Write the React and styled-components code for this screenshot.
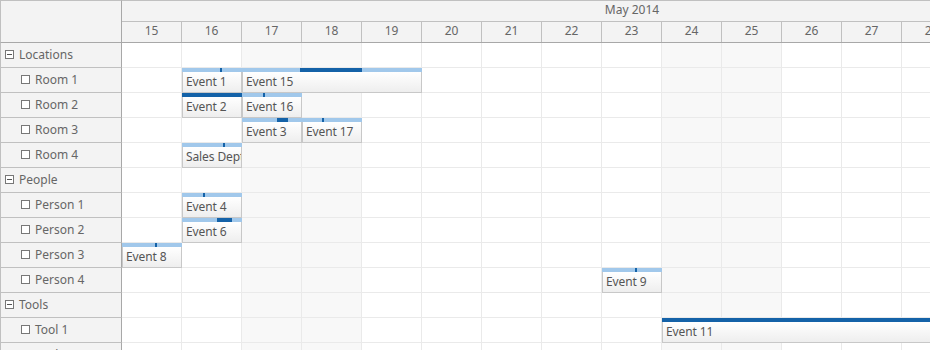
import React from 'react';
import styled, { createGlobalStyle } from 'styled-components';

const GlobalStyle = createGlobalStyle`
  html, body {
    margin: 0;
    padding: 0;
    background: #fff;
  }
  body {
    font-family: "Noto Sans", "Liberation Sans", Arial, sans-serif;
    font-size: 12px;
    color: #666;
  }
`;

const CELL = 60;
const ROW = 25;
const DAYS = Array.from({ length: 17 }, (_, i) => 15 + i);
const WEEKEND = [17, 18, 24, 25, 31];

const ROWS = [
  { name: 'Locations', parent: true },
  { name: 'Room 1' },
  { name: 'Room 2' },
  { name: 'Room 3' },
  { name: 'Room 4' },
  { name: 'People', parent: true },
  { name: 'Person 1' },
  { name: 'Person 2' },
  { name: 'Person 3' },
  { name: 'Person 4' },
  { name: 'Tools', parent: true },
  { name: 'Tool 1' },
  { name: 'Tool 2' },
];

// start = column index from May 15, done = dark part of the bar in px
const EVENTS = [
  { row: 1, text: 'Event 1', start: 1, span: 1, done: [38, 40] },
  { row: 1, text: 'Event 15', start: 2, span: 3, done: [58, 120] },
  { row: 2, text: 'Event 2', start: 1, span: 1, done: [0, 60] },
  { row: 2, text: 'Event 16', start: 2, span: 1, done: [21, 23] },
  { row: 3, text: 'Event 3', start: 2, span: 1, done: [35, 46] },
  { row: 3, text: 'Event 17', start: 3, span: 1, done: [20, 22] },
  { row: 4, text: 'Sales Dept', start: 1, span: 1, done: [41, 43] },
  { row: 6, text: 'Event 4', start: 1, span: 1, done: [21, 23] },
  { row: 7, text: 'Event 6', start: 1, span: 1, done: [35, 50] },
  { row: 8, text: 'Event 8', start: 0, span: 1, done: [33, 35] },
  { row: 9, text: 'Event 9', start: 8, span: 1, done: [33, 35] },
  { row: 11, text: 'Event 11', start: 9, span: 8, done: [0, 480] },
];

const Scheduler = styled.div`
  display: grid;
  grid-template-columns: 122px 1fr;
  grid-template-rows: 43px 1fr;
  width: 930px;
  height: 350px;
  overflow: hidden;
`;

const Corner = styled.div`
  box-sizing: border-box;
  background: #f3f3f3;
  border-top: 1px solid #c0c0c0;
  border-left: 1px solid #c0c0c0;
  border-right: 1px solid #a8a8a8;
  border-bottom: 1px solid #a8a8a8;
`;

const TimeHeader = styled.div`
  overflow: hidden;
  background: #f3f3f3;
  border-top: 1px solid #c0c0c0;
  border-bottom: 1px solid #a8a8a8;
  box-sizing: border-box;
`;

const MonthRow = styled.div`
  box-sizing: border-box;
  width: ${DAYS.length * CELL}px;
  height: 21px;
  line-height: 18px;
  text-align: center;
  border-bottom: 1px solid #c0c0c0;
`;

const DayRow = styled.div`
  display: flex;
  width: ${DAYS.length * CELL}px;
  height: 20px;
`;

const DayCell = styled.div`
  box-sizing: border-box;
  flex: 0 0 ${CELL}px;
  line-height: 17px;
  text-align: center;
  border-right: 1px solid #c0c0c0;
`;

const RowHeaders = styled.div`
  display: flex;
  flex-direction: column;
`;

const RowHeader = styled.div`
  box-sizing: border-box;
  display: flex;
  align-items: center;
  gap: 5px;
  height: ${ROW}px;
  flex: 0 0 ${ROW}px;
  padding-left: ${(p) => (p.$parent ? 4 : 20)}px;
  padding-bottom: 1px;
  background: #f3f3f3;
  border-left: 1px solid #c0c0c0;
  border-right: 1px solid #a8a8a8;
  border-bottom: 1px solid #c0c0c0;
  white-space: nowrap;
`;

const Toggle = styled.span`
  box-sizing: border-box;
  position: relative;
  flex: 0 0 9px;
  width: 9px;
  height: 9px;
  border: 1px solid #777;
  background: #fff;

  &::after {
    content: '';
    display: ${(p) => (p.$minus ? 'block' : 'none')};
    position: absolute;
    left: 1px;
    right: 1px;
    top: 3px;
    height: 1px;
    background: #555;
  }
`;

const Grid = styled.div`
  display: flex;
  flex-direction: column;
  overflow: hidden;
`;

const GridRow = styled.div`
  position: relative;
  display: flex;
  width: ${DAYS.length * CELL}px;
  height: ${ROW}px;
  flex: 0 0 ${ROW}px;
`;

const Cell = styled.div`
  box-sizing: border-box;
  flex: 0 0 ${CELL}px;
  height: ${ROW}px;
  background: ${(p) => (p.$weekend ? '#f8f8f8' : '#fff')};
  border-right: 1px solid #eaeaea;
  border-bottom: 1px solid #eaeaea;
`;

const Event = styled.div`
  position: absolute;
  top: 0;
  display: flex;
  flex-direction: column;
  height: ${ROW}px;
`;

const Bar = styled.div`
  position: relative;
  height: 4px;
  flex: 0 0 4px;
  background: #a1c8eb;
`;

const BarDone = styled.div`
  position: absolute;
  top: 0;
  bottom: 0;
  background: #1462a8;
`;

const EventBox = styled.div`
  box-sizing: border-box;
  flex: 1;
  padding-left: 3px;
  line-height: 19px;
  color: #555;
  letter-spacing: -0.1px;
  white-space: nowrap;
  overflow: hidden;
  background: linear-gradient(#ffffff, #eeeeee);
  border: 1px solid #c8c8c8;
  border-top: none;
`;

const App = () => (
  <>
    <GlobalStyle />
    <Scheduler>
      <Corner />
      <TimeHeader>
        <MonthRow>May 2014</MonthRow>
        <DayRow>
          {DAYS.map((d) => (
            <DayCell key={d}>{d}</DayCell>
          ))}
        </DayRow>
      </TimeHeader>
      <RowHeaders>
        {ROWS.map((r) => (
          <RowHeader key={r.name} $parent={r.parent}>
            <Toggle $minus={r.parent} />
            {r.name}
          </RowHeader>
        ))}
      </RowHeaders>
      <Grid>
        {ROWS.map((r, i) => (
          <GridRow key={r.name}>
            {DAYS.map((d) => (
              <Cell key={d} $weekend={WEEKEND.includes(d)} />
            ))}
            {EVENTS.filter((e) => e.row === i).map((e) => (
              <Event
                key={e.text}
                style={{ left: e.start * CELL, width: e.span * CELL }}
              >
                <Bar>
                  <BarDone style={{ left: e.done[0], width: e.done[1] - e.done[0] }} />
                </Bar>
                <EventBox>{e.text}</EventBox>
              </Event>
            ))}
          </GridRow>
        ))}
      </Grid>
    </Scheduler>
  </>
);

export default App;
